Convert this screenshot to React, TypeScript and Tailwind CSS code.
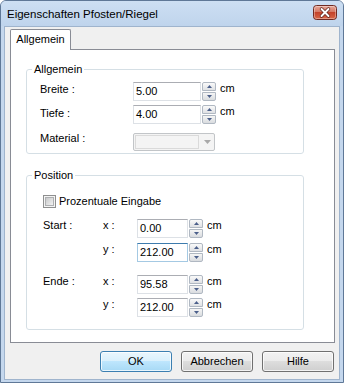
import React from "react";

function Arrow({ up }: { up?: boolean }) {
  return (
    <svg width="5" height="3" viewBox="0 0 5 3" className="block">
      <path d={up ? "M2.5 0L5 3H0Z" : "M0 0H5L2.5 3Z"} fill="#4b5f8a" />
    </svg>
  );
}

function Spinner() {
  return (
    <div className="ml-px flex h-[19px] w-[14px] flex-col">
      <div className="flex h-[9px] items-center justify-center rounded-t-[2px] border border-[#b0b8c2] bg-linear-to-b from-[#fafafa] to-[#dfe1e4]">
        <Arrow up />
      </div>
      <div className="mt-px flex h-[9px] items-center justify-center rounded-b-[2px] border border-[#b0b8c2] bg-linear-to-b from-[#f5f5f5] to-[#d9dcdf]">
        <Arrow />
      </div>
    </div>
  );
}

function NumField({ value, box, focus }: { value: string; box: string; focus?: boolean }) {
  return (
    <div className="flex items-start">
      <div
        className={`${box} flex h-[19px] items-center border bg-white pl-[2px] ${
          focus ? "border-[#a4c9e3] border-t-[#3d7bad]" : "border-[#dde1e6] border-t-[#abadb3]"
        }`}
      >
        <span className="text-[11px] leading-none text-black">{value}</span>
      </div>
      <Spinner />
      <span className="ml-[4px] text-[11px] leading-[13px] text-black">cm</span>
    </div>
  );
}

function Btn({ label, def }: { label: string; def?: boolean }) {
  return (
    <div
      className={`flex h-[21px] w-[72px] items-center justify-center rounded-[3px] border text-[11px] text-black shadow-[inset_0_0_0_1px_rgba(255,255,255,0.75)] ${
        def
          ? "border-[#3c7fb1] bg-[linear-gradient(#eaf6fd,#d9f0fc_50%,#bee6fd_50%,#a7d9f5)]"
          : "border-[#707070] bg-[linear-gradient(#f2f2f2,#ebebeb_50%,#dddddd_50%,#cfcfcf)]"
      }`}
    >
      {label}
    </div>
  );
}

function CloseButton() {
  return (
    <svg width="24" height="15" viewBox="0 0 24 15" className="block">
      <defs>
        <linearGradient id="cg" x1="0" y1="0" x2="0" y2="1">
          <stop offset="0" stopColor="#e9a99a" />
          <stop offset="0.45" stopColor="#d47a66" />
          <stop offset="0.5" stopColor="#c4432b" />
          <stop offset="1" stopColor="#d9694a" />
        </linearGradient>
      </defs>
      <rect x="0.5" y="0.5" width="23" height="14" rx="3" fill="url(#cg)" stroke="#6f2a22" />
      <rect x="1.5" y="1.5" width="21" height="12" rx="2" fill="none" stroke="rgba(255,255,255,0.35)" />
      <path d="M8.5 4L15.5 11M15.5 4L8.5 11" stroke="#5a2019" strokeWidth="3.4" strokeLinecap="round" />
      <path d="M8.5 4L15.5 11M15.5 4L8.5 11" stroke="#ffffff" strokeWidth="2" strokeLinecap="round" />
    </svg>
  );
}

function Checkbox() {
  return (
    <div className="h-[13px] w-[13px] border border-[#8e8f8f] bg-[#f4f4f4] p-[1px]">
      <div className="h-full w-full border border-[#aeb0b2] bg-linear-to-br from-[#c9cacb] to-[#f2f2f2]" />
    </div>
  );
}

export default function App() {
  return (
    <div className="flex h-[383px] w-[344px] flex-col overflow-hidden rounded-t-[6px] border border-[#5f7897] bg-[#c4d7ed] font-['Liberation_Sans',Arial,sans-serif] text-black">
      {/* Title bar */}
      <div className="flex h-[25px] items-start justify-between bg-linear-to-b from-[#cddff3] to-[#bfd4ec] pl-[6px] pr-[6px]">
        <span className="mt-[6px] text-[11.5px] leading-[14px] text-black">Eigenschaften Pfosten/Riegel</span>
        <div className="mt-[4px]">
          <CloseButton />
        </div>
      </div>

      {/* Client area */}
      <div className="mx-[3px] mb-[2px] flex flex-1 flex-col border border-[#9fb4cd] bg-[#f0f0f0]">
        {/* Tab strip */}
        <div className="ml-[5px] mt-[2px] flex">
          <div className="relative z-10 -mb-px flex h-[21px] w-[61px] items-center justify-center rounded-t-[2px] border border-b-0 border-[#898c95] bg-white pb-[1px] text-[11px]">
            Allgemein
          </div>
        </div>

        {/* Panel */}
        <div className="ml-[5px] flex h-[294px] w-[325px] flex-col border border-[#898c95] bg-white">
          {/* Allgemein group */}
          <fieldset className="ml-[15px] mt-[13px] w-[278px] rounded-[3px] border border-[#d5dfe5] pb-[2px]">
            <legend className="ml-[5px] px-[2px] text-[11px] leading-[13px]">Allgemein</legend>
            <div className="flex flex-col pl-[13px] pt-[6px] text-[11px]">
              <div className="flex h-[19px] items-start">
                <span className="mt-[1px] w-[93px] leading-[13px]">Breite :</span>
                <NumField value="5.00" box="w-[68px]" />
              </div>
              <div className="mt-[4px] flex h-[19px] items-start">
                <span className="mt-[2px] w-[93px] leading-[13px]">Tiefe :</span>
                <NumField value="4.00" box="w-[68px]" />
              </div>
              <div className="mt-[9px] flex h-[18px] items-start">
                <span className="-mt-[1px] w-[93px] leading-[13px]">Material :</span>
                <div className="flex h-[18px] w-[82px] rounded-[2px] border border-[#c2c5c8] bg-[#f4f4f4]">
                  <div className="m-px flex-1 border border-[#dadada]" />
                  <div className="flex w-[14px] items-center justify-center">
                    <svg width="7" height="4" viewBox="0 0 7 4" className="block">
                      <path d="M0 0H7L3.5 4Z" fill="#a9a9a9" />
                    </svg>
                  </div>
                </div>
              </div>
            </div>
          </fieldset>

          {/* Position group */}
          <fieldset className="ml-[15px] mt-[15px] w-[278px] rounded-[3px] border border-[#d5dfe5] pb-[12px]">
            <legend className="ml-[5px] px-[2px] text-[11px] leading-[13px]">Position</legend>
            <div className="flex flex-col pl-[16px] text-[11px]">
              <div className="mt-[12px] flex h-[15px] items-center">
                <Checkbox />
                <span className="ml-[3px] leading-[13px]">Prozentuale Eingabe</span>
              </div>
              <div className="mt-[10px] flex h-[19px] items-start">
                <span className="w-[60px] leading-[13px]">Start :</span>
                <span className="w-[34px] leading-[13px]">x :</span>
                <NumField value="0.00" box="w-[51px]" />
              </div>
              <div className="mt-[5px] flex h-[19px] items-start">
                <span className="w-[60px] leading-[13px]"></span>
                <span className="w-[34px] leading-[13px]">y :</span>
                <NumField value="212.00" box="w-[51px]" focus />
              </div>
              <div className="mt-[13px] flex h-[19px] items-start">
                <span className="w-[60px] leading-[13px]">Ende :</span>
                <span className="w-[34px] leading-[13px]">x :</span>
                <NumField value="95.58" box="w-[51px]" />
              </div>
              <div className="mt-[4px] flex h-[19px] items-start">
                <span className="w-[60px] leading-[13px]"></span>
                <span className="w-[34px] leading-[13px]">y :</span>
                <NumField value="212.00" box="w-[51px]" />
              </div>
            </div>
          </fieldset>
        </div>

        {/* Buttons */}
        <div className="mt-[8px] flex justify-end gap-[9px] pr-[5px]">
          <Btn label="OK" def />
          <Btn label="Abbrechen" />
          <Btn label="Hilfe" />
        </div>
      </div>
    </div>
  );
}
